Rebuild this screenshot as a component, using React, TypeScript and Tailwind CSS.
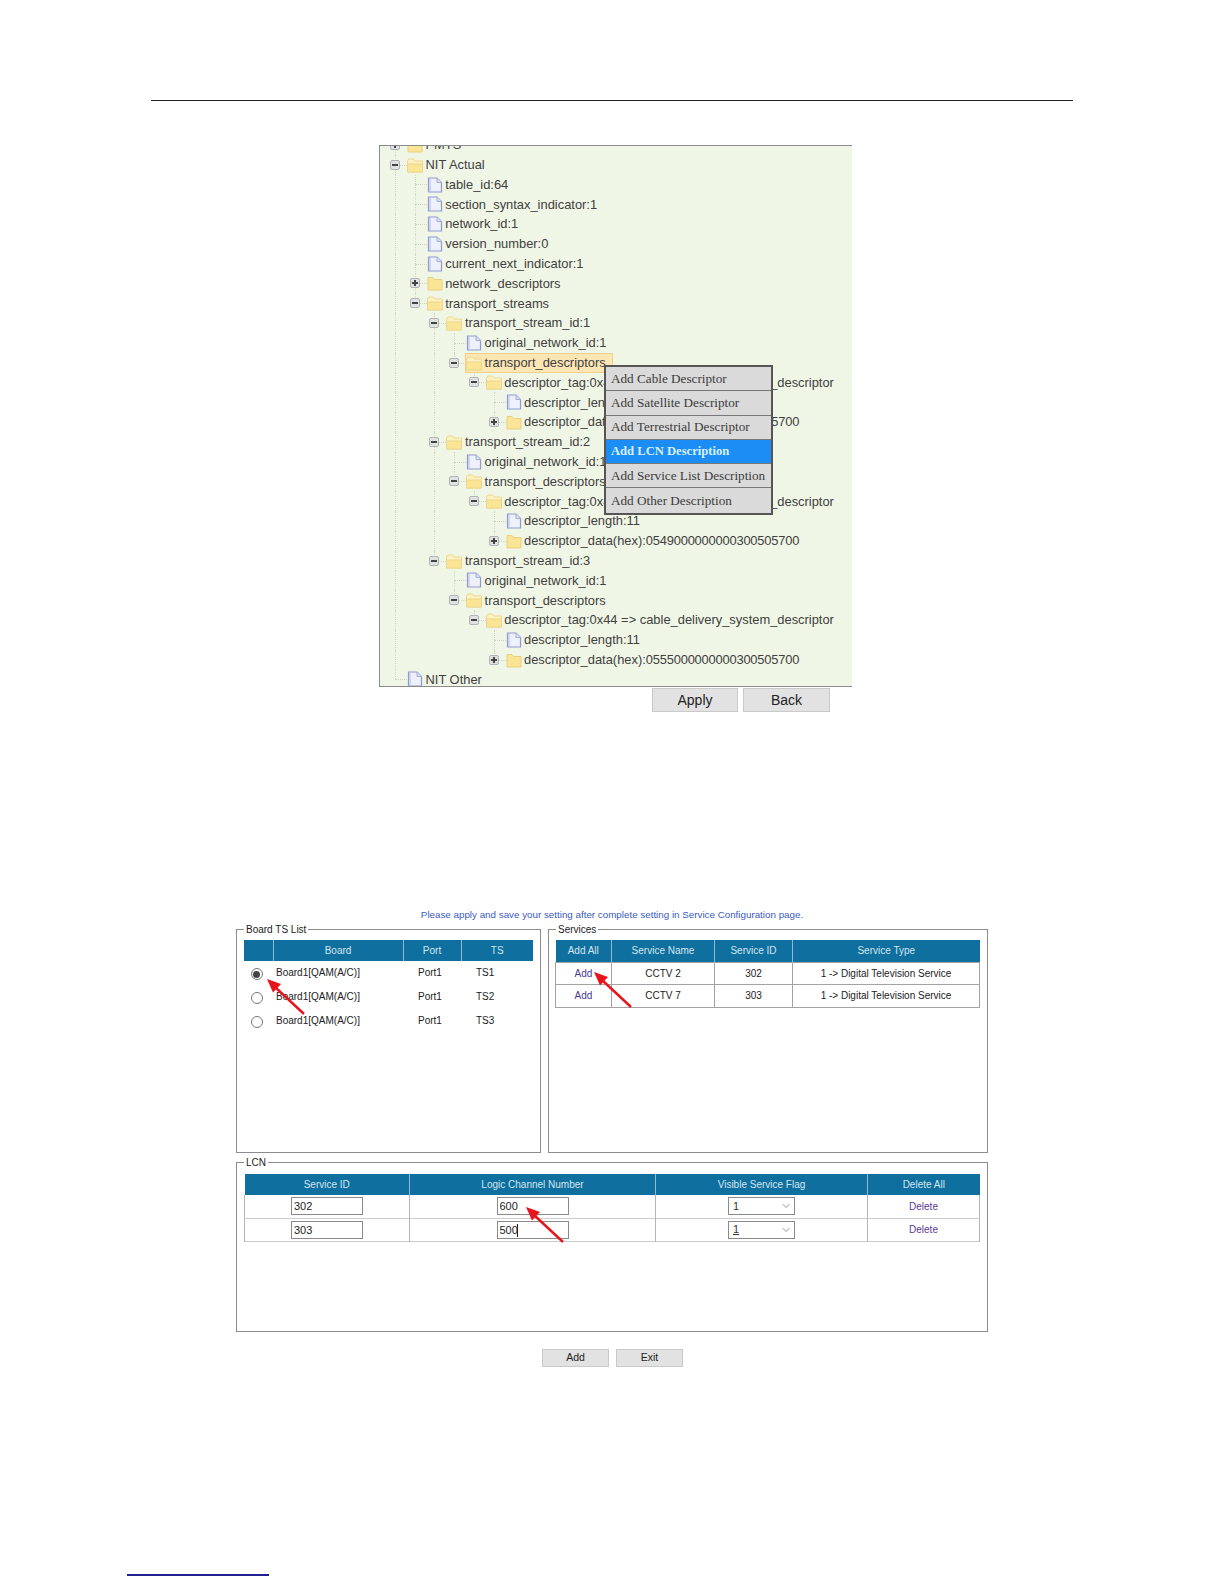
import { ChevronDown } from "lucide-react";

type Kind = "doc" | "open" | "closed";
type Row = { level: number; kind: Kind; label: string; box?: "plus" | "minus"; lines: number[]; last?: boolean; selected?: boolean };

const stream = (id: number, data: string, last: boolean, selected: boolean, lines: number[]): Row[] => [
  { level: 2, kind: "open", box: "minus", label: `transport_stream_id:${id}`, lines: [0], last },
  { level: 3, kind: "doc", label: "original_network_id:1", lines },
  { level: 3, kind: "open", box: "minus", label: "transport_descriptors", lines, last: true, selected },
  { level: 4, kind: "open", box: "minus", label: "descriptor_tag:0x44 => cable_delivery_system_descriptor", lines, last: true },
  { level: 5, kind: "doc", label: "descriptor_length:11", lines },
  { level: 5, kind: "closed", box: "plus", label: `descriptor_data(hex):${data}`, lines, last: true },
];

const rows: Row[] = [
  { level: 0, kind: "closed", box: "plus", label: "PMTS", lines: [] },
  { level: 0, kind: "open", box: "minus", label: "NIT Actual", lines: [] },
  { level: 1, kind: "doc", label: "table_id:64", lines: [0] },
  { level: 1, kind: "doc", label: "section_syntax_indicator:1", lines: [0] },
  { level: 1, kind: "doc", label: "network_id:1", lines: [0] },
  { level: 1, kind: "doc", label: "version_number:0", lines: [0] },
  { level: 1, kind: "doc", label: "current_next_indicator:1", lines: [0] },
  { level: 1, kind: "closed", box: "plus", label: "network_descriptors", lines: [0] },
  { level: 1, kind: "open", box: "minus", label: "transport_streams", lines: [0], last: true },
  ...stream(1, "0546000000000300505700", false, true, [0, 2]),
  ...stream(2, "0549000000000300505700", false, false, [0, 2]),
  ...stream(3, "0555000000000300505700", true, false, [0]),
  { level: 0, kind: "doc", label: "NIT Other", lines: [], last: true },
];

const colX = (level: number) => 15 + level * 19.7;

function TreeIcon({ kind }: { kind: Kind }) {
  if (kind === "doc")
    return (
      <svg width="16" height="16" viewBox="0 0 16 16" className="shrink-0">
        <path d="M1.5 1h8.500l4.500 4.500v9.500h-13z" fill="#eef1fb" stroke="#8f9bd0" strokeWidth="1.200" />
        <path d="M10 1v4.500h4.500" fill="#d9dff4" stroke="#a3aed9" />
        <path d="M3 14v-12" stroke="#c6cdec" strokeWidth="1.500" />
      </svg>
    );
  if (kind === "open")
    return (
      <svg width="16" height="16" viewBox="0 0 16 16" className="shrink-0">
        <path d="M0.500 4l1.500-2h4.500l1.500 2h7.500v11h-15z" fill="#fdf2c0" stroke="#ecd68e" />
        <path d="M0.500 7h15v8h-15z" fill="#fae596" stroke="#ecd68e" />
      </svg>
    );
  return (
    <svg width="16" height="16" viewBox="0 0 16 16" className="shrink-0">
      <path d="M1 2.500h5l1.500 2h7.500v10.500h-14z" fill="#fae596" stroke="#e8d080" />
    </svg>
  );
}

function Label({ text }: { text: string }) {
  if (!text.includes("(hex):")) return <span className="ml-[2.500px]">{text}</span>;
  const [name, hex] = text.split(":");
  return (
    <span className="ml-[2.500px]">
      {name}:<span className="tracking-[-0.2px]">{hex}</span>
    </span>
  );
}

function TreeRow({ row }: { row: Row }) {
  return (
    <div className="relative flex h-[19.8px] items-center pl-[10px] text-[12.9px] text-[#404040]">
      {row.lines.map((l) => (
        <span key={l} className="absolute top-0 h-full border-l border-dotted border-[#d0d8c4]" style={{ left: colX(l) }} />
      ))}
      <span
        className={`absolute border-l border-dotted border-[#d0d8c4] ${row.last ? "top-0 h-1/2" : "top-0 h-full"}`}
        style={{ left: colX(row.level) }}
      />
      <span className="absolute top-1/2 w-[12px] border-t border-dotted border-[#d0d8c4]" style={{ left: colX(row.level) }} />
      <span className="shrink-0" style={{ width: row.level * 19.7 }} />
      <span className="relative flex h-[10px] w-[10px] shrink-0 items-center justify-center">
        {row.box && (
          <span className="relative flex h-[10px] w-[10px] items-center justify-center rounded-[2px] border border-[#aeb5ba] bg-[#dfe2de]">
            <span className="h-[2px] w-[6px] bg-[#444]" />
            {row.box === "plus" && <span className="absolute h-[6px] w-[2px] bg-[#444]" />}
          </span>
        )}
      </span>
      <span
        className={`relative ml-[6px] flex h-[20px] items-center whitespace-nowrap border pr-[6px] ${
          row.selected ? "border-[#f2cf8a] bg-[#fbe6b4]" : "border-transparent"
        }`}
      >
        <TreeIcon kind={row.kind} />
        <Label text={row.label} />
      </span>
    </div>
  );
}

const menuItems = [
  "Add Cable Descriptor",
  "Add Satellite Descriptor",
  "Add Terrestrial Descriptor",
  "Add LCN Description",
  "Add Service List Description",
  "Add Other Description",
];

function Arrow({ className }: { className: string }) {
  return (
    <svg width="40" height="38" viewBox="0 0 40 38" className={`absolute ${className}`}>
      <path d="M9 9L38 36" stroke="#e8141c" strokeWidth="2.400" />
      <path d="M1 1L15 6L7 14.500Z" fill="#e8141c" />
    </svg>
  );
}

function Radio({ checked }: { checked?: boolean }) {
  return (
    <span className="-ml-[4px] mt-[3px] flex h-[12px] w-[12px] items-center justify-center rounded-full border border-[#777] bg-white">
      {checked && <span className="h-[7px] w-[7px] rounded-full bg-[#444]" />}
    </span>
  );
}

function Panel({ title, className, children }: { title: string; className: string; children?: React.ReactNode }) {
  return (
    <fieldset className={`border border-[#8c8c8c] px-[7px] ${className}`}>
      <legend className="px-[2px] pt-px text-[10px] leading-[12px] text-[#222]">{title}</legend>
      {children}
    </fieldset>
  );
}

const th = "border-r border-[#8dbbd3] bg-[#0f6f9e] text-center text-[10px] font-normal text-[#d5e6f0] last:border-r-0";

function Field({ value, caret }: { value: string; caret?: boolean }) {
  return (
    <div className="relative mx-auto w-[72px]">
      <input
        readOnly
        value={value}
        className="block h-[18px] w-[72px] border border-[#8a8a8a] bg-white pl-[2px] text-[11px] text-[#222] outline-none"
      />
      {caret && <span className="absolute left-[20px] top-[3px] h-[13px] w-px bg-[#222]" />}
    </div>
  );
}

function FlagSelect({ underline }: { underline?: boolean }) {
  return (
    <div className="mx-auto flex h-[18px] w-[67px] items-center justify-between border border-[#8a8a8a] bg-white pl-[4px] pr-[2px]">
      <span className={`text-[11px] text-[#333] ${underline ? "underline" : ""}`}>1</span>
      <ChevronDown size={12} strokeWidth={1.25} className="text-[#555]" />
    </div>
  );
}

export default function App() {
  return (
    <div className="relative flex h-[1584px] w-[1224px] flex-col overflow-hidden bg-white font-['Liberation_Sans',Arial,sans-serif]">
      <div className="ml-[151px] mt-[100px] h-px w-[922px] bg-[#222]" />

      {/* tree */}
      <div className="ml-[379px] mt-[44px] h-[542px] w-[473px] overflow-hidden border-y border-l border-[#8c8c8c] bg-[#f0f6e6]">
        <div className="-mt-[11px]">
          {rows.map((r, i) => (
            <TreeRow key={i} row={r} />
          ))}
        </div>
      </div>
      <div className="ml-[652px] mt-px flex h-[24px] gap-[5px] text-[14px] text-[#222]">
        <button className="w-[86px] border border-[#c9c9c9] bg-[#e2e2e2]">Apply</button>
        <button className="w-[87px] border border-[#c9c9c9] bg-[#e2e2e2]">Back</button>
      </div>

      {/* config page */}
      <p className="mt-[197px] h-[12px] text-center text-[9.8px] leading-[12px] text-[#3a5cc0]">
        Please apply and save your setting after complete setting in Service Configuration page.
      </p>
      <div className="ml-[236px] mt-[2px] flex w-[752px] justify-between">
        <Panel title="Board TS List" className="h-[230px] w-[305px]">
          <table className="mt-[4px] w-[289px] table-fixed border-collapse text-[10px] text-[#222]">
            <colgroup>
              <col className="w-[29px]" />
              <col className="w-[130px]" />
              <col className="w-[58px]" />
              <col />
            </colgroup>
            <thead>
              <tr className="h-[21px]">
                <th className={th}></th>
                <th className={th}>Board</th>
                <th className={th}>Port</th>
                <th className={th}>TS</th>
              </tr>
            </thead>
            <tbody>
              {["TS1", "TS2", "TS3"].map((ts, i) => (
                <tr key={ts} className="h-[23.75px]">
                  <td>
                    <div className="flex justify-center">
                      <Radio checked={i === 0} />
                    </div>
                  </td>
                  <td className="pl-[3px]">Board1[QAM(A/C)]</td>
                  <td className="pl-[15px]">Port1</td>
                  <td className="pl-[15px]">{ts}</td>
                </tr>
              ))}
            </tbody>
          </table>
        </Panel>
        <Panel title="Services" className="h-[230px] w-[439px]">
          <table className="-ml-px mt-[4px] w-[425px] table-fixed border-collapse text-center text-[10px] text-[#222]">
            <colgroup>
              <col className="w-[56px]" />
              <col className="w-[103px]" />
              <col className="w-[78px]" />
              <col />
            </colgroup>
            <thead>
              <tr className="h-[22px]">
                <th className={th}>Add All</th>
                <th className={th}>Service Name</th>
                <th className={th}>Service ID</th>
                <th className={th}>Service Type</th>
              </tr>
            </thead>
            <tbody>
              {[
                ["CCTV 2", "302"],
                ["CCTV 7", "303"],
              ].map(([name, id]) => (
                <tr key={id} className="h-[22.500px]">
                  <td className="border border-[#a3a3a3] text-[#4b3a8c]">Add</td>
                  <td className="border border-[#a3a3a3]">{name}</td>
                  <td className="border border-[#a3a3a3]">{id}</td>
                  <td className="border border-[#a3a3a3]">1 -&gt; Digital Television Service</td>
                </tr>
              ))}
            </tbody>
          </table>
        </Panel>
      </div>
      <Panel title="LCN" className="ml-[236px] mt-[3px] h-[176px] w-[751px]">
        <table className="mt-[5px] w-[736px] table-fixed border-collapse text-center text-[10px] text-[#222]">
          <colgroup>
            <col className="w-[165px]" />
            <col className="w-[246px]" />
            <col className="w-[212px]" />
            <col />
          </colgroup>
          <thead>
            <tr className="h-[21px]">
              <th className={th}>Service ID</th>
              <th className={th}>Logic Channel Number</th>
              <th className={th}>Visible Service Flag</th>
              <th className={th}>Delete All</th>
            </tr>
          </thead>
          <tbody>
            {[
              ["302", "600"],
              ["303", "500"],
            ].map(([id, lcn], i) => (
              <tr key={id} className="h-[23px] border-b border-[#cccccc]">
                <td className="border-x border-[#b5b5b5]">
                  <Field value={id} />
                </td>
                <td className="border-r border-[#b5b5b5]">
                  <Field value={lcn} caret={i === 1} />
                </td>
                <td className="border-r border-[#b5b5b5]">
                  <FlagSelect underline={i === 1} />
                </td>
                <td className="border-r border-[#b5b5b5] text-[#5a3a96]">Delete</td>
              </tr>
            ))}
          </tbody>
        </table>
      </Panel>
      <div className="ml-[542px] mt-[17px] flex h-[18px] gap-[7px] text-[10.500px] text-[#222]">
        <button className="w-[67px] border border-[#c9c9c9] bg-[#e2e2e2]">Add</button>
        <button className="w-[67px] border border-[#c9c9c9] bg-[#e2e2e2]">Exit</button>
      </div>

      <div className="mb-[8px] ml-[127px] mt-auto h-[2px] w-[142px] bg-[#1f1f8f]" />

      {/* context menu over the tree */}
      <div className="absolute left-[604px] top-[365px] flex h-[150px] w-[169px] flex-col border-2 border-[#555] bg-[#dadada] font-['Liberation_Serif',serif] text-[13.2px] text-[#3a3a3a]">
        {menuItems.map((m, i) => (
          <div
            key={m}
            className={`flex items-center border-b border-[#777] pl-[5px] last:border-b-0 ${i < 5 ? "h-[24.3px]" : "flex-1"} ${
              m === "Add LCN Description" ? "bg-[#1b8df5] text-[12.6px] font-bold text-[#d8f0ff]" : ""
            }`}
          >
            {m}
          </div>
        ))}
      </div>

      <Arrow className="left-[266px] top-[978px]" />
      <Arrow className="left-[593px] top-[971px]" />
      <Arrow className="left-[525px] top-[1206px]" />
    </div>
  );
}
